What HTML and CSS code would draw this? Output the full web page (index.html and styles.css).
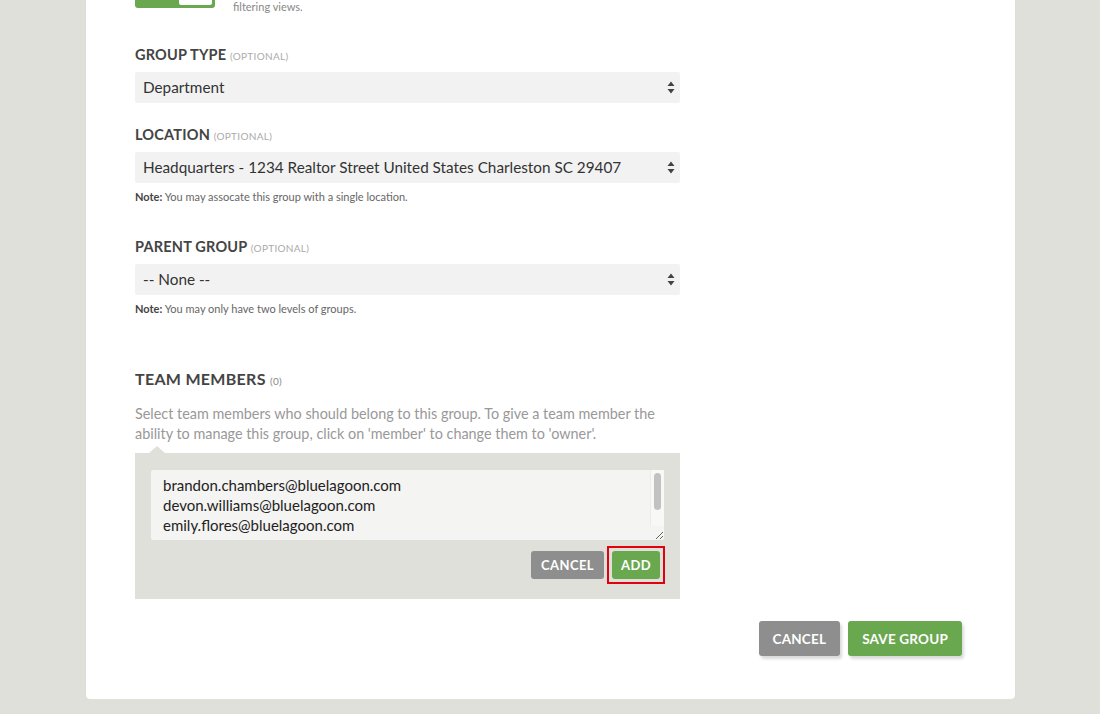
FILE: index.html
```html
<!DOCTYPE html>
<html lang="en">
<head>
    <meta charset="UTF-8">
    <meta name="viewport" content="width=device-width, initial-scale=1.0">
    <title>Edit Group</title>
    <link rel="stylesheet" href="styles.css">
</head>
<body>
    <div class="card">
        <div class="toggle-row">
            <div class="toggle"><span class="knob"></span></div>
            <p class="help">filtering views.</p>
        </div>

        <div class="field">
            <label class="label" for="groupType">Group Type <span class="optional">(Optional)</span></label>
            <div class="select-wrap">
                <select id="groupType" class="select">
                    <option>Department</option>
                    <option>Team</option>
                    <option>Office</option>
                </select>
                <svg class="arrows" width="8" height="13" viewBox="0 0 8 13"><path d="M4 0.5 L7.5 5 H0.5 Z M4 12.5 L7.5 8 H0.5 Z" fill="#444"/></svg>
            </div>
        </div>

        <div class="field">
            <label class="label" for="location">Location <span class="optional">(Optional)</span></label>
            <div class="select-wrap">
                <select id="location" class="select">
                    <option>Headquarters - 1234 Realtor Street United States Charleston SC 29407</option>
                </select>
                <svg class="arrows" width="8" height="13" viewBox="0 0 8 13"><path d="M4 0.5 L7.5 5 H0.5 Z M4 12.5 L7.5 8 H0.5 Z" fill="#444"/></svg>
            </div>
            <p class="note"><strong>Note:</strong> You may assocate this group with a single location.</p>
        </div>

        <div class="field field-spaced">
            <label class="label" for="parentGroup">Parent Group <span class="optional">(Optional)</span></label>
            <div class="select-wrap">
                <select id="parentGroup" class="select">
                    <option>-- None --</option>
                </select>
                <svg class="arrows" width="8" height="13" viewBox="0 0 8 13"><path d="M4 0.5 L7.5 5 H0.5 Z M4 12.5 L7.5 8 H0.5 Z" fill="#444"/></svg>
            </div>
            <p class="note"><strong>Note:</strong> You may only have two levels of groups.</p>
        </div>

        <div class="members">
            <h3 class="members-title">Team Members <span class="count">(0)</span></h3>
            <p class="members-desc">Select team members who should belong to this group. To give a team member the ability to manage this group, click on 'member' to change them to 'owner'.</p>

            <div class="add-panel">
                <div class="emails-wrap">
                    <textarea class="emails" rows="3">brandon.chambers@bluelagoon.com
devon.williams@bluelagoon.com
emily.flores@bluelagoon.com
grace.turner@bluelagoon.com
marcus.hill@bluelagoon.com</textarea>
                    <span class="scroll-track"><span class="scroll-thumb"></span></span>
                </div>
                <div class="panel-actions">
                    <button class="btn btn-gray btn-small">Cancel</button>
                    <span class="marked"><button class="btn btn-green btn-small">Add</button></span>
                </div>
            </div>
        </div>

        <div class="form-actions">
            <button class="btn btn-gray btn-large">Cancel</button>
            <button class="btn btn-green btn-large">Save Group</button>
        </div>
    </div>
</body>
</html>
```

FILE: styles.css
```css
body {
    margin: 0;
    background-color: #e0e0da;
    font-family: Lato, "Open Sans", sans-serif;
    color: #3c3c3c;
}
.card {
    width: 880px;
    margin-left: 86px;
    padding: 0 0 43px 49px;
    background-color: #fff;
    border-radius: 0 0 4px 4px;
    box-shadow: 0 0 2px rgba(0, 0, 0, 0.06);
}
.toggle-row {
    display: flex;
    align-items: flex-start;
    gap: 18px;
}
.toggle {
    width: 80px;
    height: 30px;
    margin-top: -22px;
    background-color: #6aa84f;
    border-radius: 3px;
    display: flex;
    justify-content: flex-end;
    align-items: flex-end;
    padding: 0 3px 3px 0;
    box-sizing: border-box;
}
.knob {
    width: 33px;
    height: 24px;
    background-color: #fff;
    border-radius: 2px;
}
.help {
    margin: 0;
    font-size: 11px;
    line-height: 13px;
    color: #888;
}
.field {
    width: 545px;
    margin-top: 33px;
}
.field + .field {
    margin-top: 23px;
}
.field-spaced {
    margin-top: 34px !important;
}
.label {
    display: block;
    font-size: 14.5px;
    font-weight: 700;
    line-height: 18px;
    letter-spacing: 0.2px;
    text-transform: uppercase;
    color: #444;
    margin-bottom: 7px;
}
.optional {
    font-size: 10px;
    font-weight: 400;
    color: #aaa;
    letter-spacing: 0.3px;
}
.select-wrap {
    position: relative;
}
.select {
    -webkit-appearance: none;
    appearance: none;
    width: 100%;
    height: 31px;
    padding: 0 30px 2px 8px;
    border: none;
    border-radius: 2px;
    background-color: #f2f2f2;
    font-family: inherit;
    font-size: 15.3px;
    color: #333;
}
.arrows {
    position: absolute;
    right: 5px;
    top: 9px;
    pointer-events: none;
}
.note {
    margin: 7px 0 0;
    font-size: 11px;
    line-height: 14px;
    color: #666;
}
.note strong {
    color: #444;
}
.members {
    width: 545px;
    margin-top: 53px;
}
.members-title {
    margin: 0;
    font-size: 16px;
    line-height: 20px;
    font-weight: 700;
    letter-spacing: 0.3px;
    text-transform: uppercase;
    color: #444;
}
.count {
    font-size: 10px;
    font-weight: 400;
    color: #888;
}
.members-desc {
    margin: 13px 0 9px;
    font-size: 14.4px;
    line-height: 20px;
    color: #999;
}
.add-panel {
    position: relative;
    background-color: #e0e0da;
    padding: 17px 16px 15px;
}
/* little pointer above the panel */
.add-panel::before {
    content: "";
    position: absolute;
    left: 14px;
    top: -7px;
    border-left: 8px solid transparent;
    border-right: 8px solid transparent;
    border-bottom: 7px solid #e0e0da;
}
.emails-wrap {
    position: relative;
}
.emails {
    display: block;
    width: 100%;
    height: 70px;
    box-sizing: border-box;
    padding: 5px 26px 5px 12px;
    border: none;
    border-radius: 2px;
    background-color: #f4f4f2;
    font-family: inherit;
    font-size: 15px;
    line-height: 20px;
    color: #222;
    resize: vertical;
    overflow: hidden;
}
/* scrollbar drawn over the textarea's right edge */
.scroll-track {
    position: absolute;
    right: 0;
    top: 0;
    width: 14px;
    height: 56px;
    padding-top: 3px;
    box-sizing: border-box;
    background-color: #f8f8f7;
    border-left: 1px solid #ececea;
}
.scroll-thumb {
    display: block;
    width: 7px;
    height: 37px;
    margin-left: 3px;
    border-radius: 4px;
    background-color: #c2c2c2;
}
.panel-actions {
    display: flex;
    justify-content: flex-end;
    align-items: center;
    gap: 3px;
    margin-top: 6px;
    margin-right: -1px;
}
.btn {
    border: none;
    border-radius: 3px;
    color: #fff;
    font-family: inherit;
    font-weight: 700;
    text-transform: uppercase;
    letter-spacing: 0.4px;
    cursor: pointer;
}
.btn-gray {
    background-color: #8e8e8e;
}
.btn-green {
    background-color: #6aa84f;
}
.btn-small {
    height: 28px;
    padding: 0 10px;
    font-size: 13px;
}
/* highlighted button frame */
.marked {
    display: flex;
    padding: 3px;
    border: 2px solid #e3000f;
}
.marked .btn-small {
    padding: 0 9px;
}
.form-actions {
    display: flex;
    justify-content: flex-end;
    gap: 8px;
    margin-top: 22px;
    padding-right: 53px;
}
.btn-large {
    height: 35px;
    padding: 0 14px;
    font-size: 13.5px;
    letter-spacing: 0.2px;
    box-shadow: 2px 3px 3px rgba(0, 0, 0, 0.15);
}
```
